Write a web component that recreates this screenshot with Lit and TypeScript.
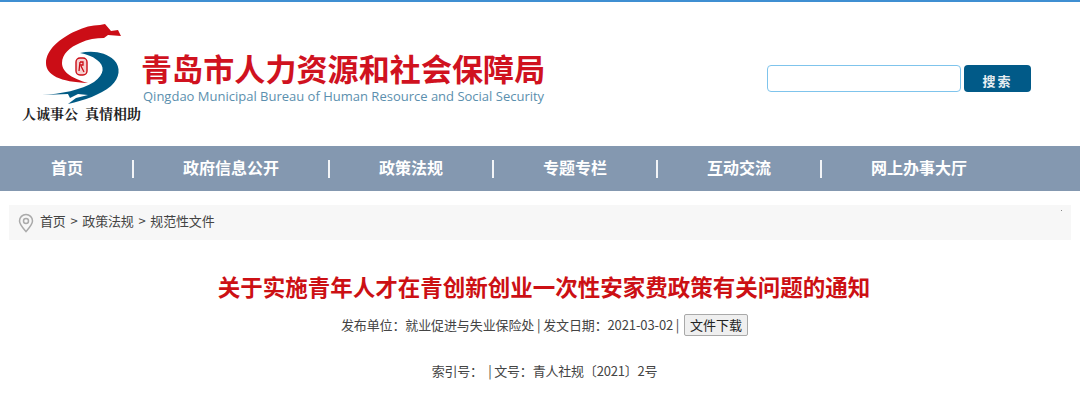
import { LitElement, html, css } from "lit";
import { customElement } from "lit/decorators.js";

@customElement("app-root")
export class AppRoot extends LitElement {
  static styles = css`
    :host { display: block; height: 403px; overflow: hidden; background: #fff; font-family: "Liberation Sans", "Noto Sans CJK SC", sans-serif; color: #333; }
    .top { height: 2px; background: #3f8fd2; }
    .header { height: 144px; display: flex; padding-left: 22px; box-sizing: border-box; position: relative; }
    .logo-col { width: 120px; padding-top: 20px; display: flex; flex-direction: column; }
    .logo-col svg { display: block; }
    .slogan { font: 700 14px/16px "Noto Serif CJK SC", "Noto Sans CJK SC", serif; color: #222; white-space: nowrap; margin-top: -3px; }
    .brand { padding-top: 47px; }
    .brand h1 { margin: 0 0 0 -1px; font: 700 31px/38px "Noto Sans CJK SC", sans-serif; letter-spacing: 0.1px; color: #d0121f; white-space: nowrap; }
    .brand p { margin: 0 0 0 1px; font: 13px/18px "Open Sans", sans-serif; color: #5b8fae; white-space: nowrap; }
    .search { position: absolute; left: 767px; top: 63px; display: flex; gap: 3px; }
    .search input { width: 194px; height: 27px; box-sizing: border-box; border: 1px solid #7fc4ec; border-radius: 4px; padding: 0; background: #fff; }
    .search button { width: 67px; height: 27px; border: 0; border-radius: 4px; background: #015a88; color: #e8eef2; font: 700 13px/27px "Noto Sans CJK SC", sans-serif; letter-spacing: 2px; padding: 2px 0 0; }
    nav { height: 45px; background: #8498b0; display: flex; align-items: center; padding-left: 2px; color: #fff; font: 700 16px/24px "Noto Sans CJK SC", sans-serif; }
    nav a { padding: 0 49px 4px; white-space: nowrap; }
    nav i { width: 2px; height: 18px; background: #f2f4f7; flex: none; }
    .crumb { margin: 14px 9px 0; height: 35px; box-sizing: border-box; padding: 0 0 3px 9px; background: #f7f7f7; display: flex; align-items: center; gap: 6px; font: 13px/32px "Noto Sans CJK SC", sans-serif; color: #444; word-spacing: 2px; letter-spacing: -0.15px; position: relative; }
    .crumb svg { margin-top: 3px; }
    .crumb::after { content: ""; position: absolute; right: 9px; top: 5px; width: 1px; height: 1px; background: #888; }
    h2 { margin: 28px 0 0; padding-left: 8px; text-align: center; font: 700 22.5px/36px "Noto Sans CJK SC", sans-serif; color: #cc1014; height: 36px; white-space: nowrap; }
    .meta { margin-top: 9px; height: 24px; padding-left: 9px; display: flex; justify-content: center; align-items: center; font: 13px/24px "Noto Sans CJK SC", "Liberation Sans", sans-serif; color: #444; white-space: pre; letter-spacing: -0.12px; }
    .meta button { width: 64px; height: 22px; margin-left: 2px; padding: 0; border: 1px solid #a9a9a9; border-radius: 2px; background: #efefef; color: #222; font: 13px/20px "Noto Sans CJK SC", sans-serif; }
    .idx { margin-top: 22px; padding-left: 9px; text-align: center; font: 13px/24px "Noto Sans CJK SC", sans-serif; color: #444; white-space: pre; letter-spacing: -0.2px; }
  `;

  render() {
    const items = ["首页", "政府信息公开", "政策法规", "专题专栏", "互动交流", "网上办事大厅"];
    return html`
      <div class="top"></div>
      <div class="header">
        <div class="logo-col">
          <svg width="100" height="86" viewBox="22 22 100 86">
            <path fill="#cb0d16" d="M121 36 L118 30 L111 31 L105 24 L100 25 C 92 25 84 27 76 31 C 60 38 46 50 46 63 C 46 75 60 82 88 83 C 74 79 62 73 62 63 C 62 54 70 47 80 43 C 88 39 96 38 104 38 L108 35 Z"/>
            <path fill="#005a84" d="M80 53 C 92 50 106 52 114 60 C 121 67 120 78 111 86 C 100 95 85 100 68 104 L76 98 L88 95 L78 94 L70 98 L68 94 L42 95 C 60 94 82 90 94 82 C 105 74 105 66 97 60 C 92 56 86 54 80 53 Z"/>
            <rect x="76" y="58" width="11" height="17" rx="4" fill="#f6d0d0" stroke="#cb0d16" stroke-width="1.4"/>
            <path fill="none" stroke="#cb0d16" stroke-width="1.3" d="M80 62 L79 71 M80 62 h3 v3 h-3 M81 66 l3 6"/>
          </svg>
          <div class="slogan">人诚事公&nbsp;&nbsp;真情相助</div>
        </div>
        <div class="brand">
          <h1>青岛市人力资源和社会保障局</h1>
          <p>Qingdao Municipal Bureau of Human Resource and Social Security</p>
        </div>
        <div class="search"><input type="text" /><button>搜索</button></div>
      </div>
      <nav>
        ${items.map((t, i) => html`${i ? html`<i></i>` : ""}<a>${t}</a>`)}
      </nav>
      <div class="crumb">
        <svg width="16" height="20" viewBox="0 0 16 20" fill="none" stroke="#aaa" stroke-width="1.5">
          <path d="M8 18.5 C 5 15 1.5 11.5 1.5 8 a6.5 6.5 0 0 1 13 0 C 14.5 11.5 11 15 8 18.5 Z"/>
          <circle cx="8" cy="8" r="2.5"/>
        </svg>
        <span>首页 &gt; 政策法规 &gt; 规范性文件</span>
      </div>
      <h2>关于实施青年人才在青创新创业一次性安家费政策有关问题的通知</h2>
      <div class="meta">发布单位：就业促进与失业保险处 | 发文日期：2021-03-02 | <button>文件下载</button></div>
      <div class="idx">索引号：  | 文号：青人社规〔2021〕2号</div>
    `;
  }
}
